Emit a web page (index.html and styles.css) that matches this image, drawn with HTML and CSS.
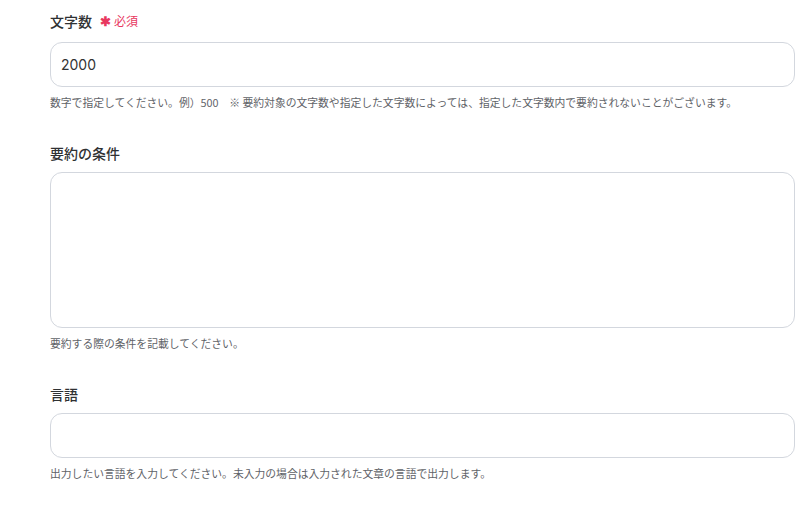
FILE: index.html
```html
<!DOCTYPE html>
<html lang="ja">
<head>
<meta charset="utf-8">
<link rel="stylesheet" href="styles.css">
</head>
<body>
<form class="form">
  <div class="field field-first">
    <div class="label-row">
      <span class="label">文字数</span>
      <span class="required"><span class="star">✱</span>必須</span>
    </div>
    <div class="input">2000</div>
    <p class="help">数字で指定してください。例）500　※ 要約対象の文字数や指定した文字数によっては、指定した文字数内で要約されないことがございます。</p>
  </div>
  <div class="field">
    <div class="label-row">
      <span class="label">要約の条件</span>
    </div>
    <div class="textarea"></div>
    <p class="help">要約する際の条件を記載してください。</p>
  </div>
  <div class="field">
    <div class="label-row">
      <span class="label">言語</span>
    </div>
    <div class="input"></div>
    <p class="help">出力したい言語を入力してください。未入力の場合は入力された文章の言語で出力します。</p>
  </div>
</form>
</body>
</html>
```
FILE: styles.css
```css
html, body {
  margin: 0;
  padding: 0;
  background: #ffffff;
}
body {
  font-family: "Noto Sans CJK JP", "Noto Sans", sans-serif;
  color: #333333;
}
.form {
  display: flex;
  flex-direction: column;
  gap: 33px;
  padding: 11px 0 0 50px;
  width: 745px;
}
.field {
  display: flex;
  flex-direction: column;
}
.label-row {
  display: flex;
  align-items: center;
  gap: 8px;
  height: 20px;
  margin-bottom: 9px;
}
.field-first .label-row {
  margin-bottom: 11px;
}
.label {
  font-size: 14px;
  font-weight: 500;
  color: #2f3133;
  line-height: 20px;
}
.required {
  font-size: 12px;
  color: #e8385f;
  line-height: 20px;
  display: flex;
  align-items: center;
}
.star {
  font-size: 13px;
  font-weight: 700;
  margin-right: 3px;
}
.input,
.textarea {
  box-sizing: border-box;
  border: 1px solid #d3d7de;
  border-radius: 12px;
  background: #ffffff;
  font-family: "Inter", "Noto Sans CJK JP", sans-serif;
  font-size: 14px;
  color: #333333;
  padding: 0 10px;
}
.input {
  height: 45px;
  display: flex;
  align-items: center;
}
.textarea {
  height: 156px;
}
.help {
  margin: 7px 0 0;
  font-size: 10.8px;
  line-height: 16px;
  color: #5f6368;
  white-space: nowrap;
}
```
